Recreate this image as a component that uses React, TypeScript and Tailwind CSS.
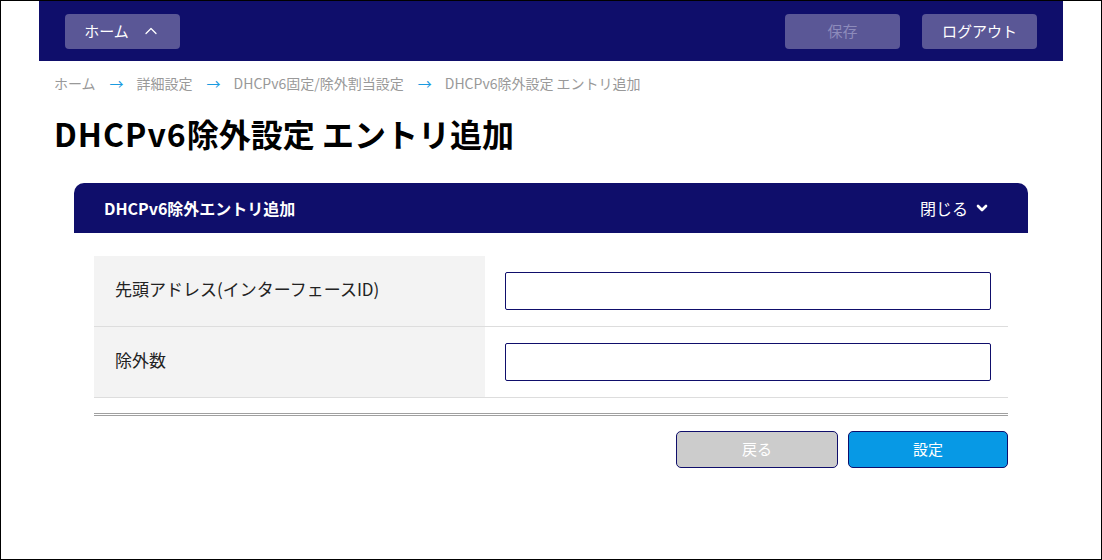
import { ChevronUp, ChevronDown } from "lucide-react";

const crumbs = ["ホーム", "詳細設定", "DHCPv6固定/除外割当設定", "DHCPv6除外設定 エントリ追加"];

const rows = ["先頭アドレス(インターフェースID)", "除外数"];

export default function App() {
  return (
    <div
      className="w-[1102px] h-[560px] border border-black bg-white text-[#222]"
      style={{ fontFamily: '"Noto Sans CJK JP", "Noto Sans", sans-serif' }}
    >
      <div className="w-[1024px] mx-auto">
        {/* top bar */}
        <header className="h-[60px] bg-[#0f0e6b] px-[26px] flex items-center justify-between">
          <button className="h-[35px] w-[115px] rounded bg-[#5a5796] text-white text-[15px] flex items-center justify-center gap-[12px]">
            ホーム
            <ChevronUp className="w-[20px] h-[20px]" strokeWidth={1.5} />
          </button>
          <div className="flex gap-[22px]">
            <button className="h-[35px] w-[115px] rounded bg-[#5a5796] text-[#8d8bbb] text-[15px]">保存</button>
            <button className="h-[35px] w-[115px] rounded bg-[#5a5796] text-white text-[15px]">ログアウト</button>
          </div>
        </header>

        {/* breadcrumb */}
        <nav className="pl-[15px] pt-[12px] flex items-center text-[14px] text-[#999]">
          {crumbs.map((c, i) => (
            <span key={c} className="flex items-center">
              {i > 0 && <span className="text-[#1a9be0] ml-[14px] mr-[13px]">→</span>}
              {c}
            </span>
          ))}
        </nav>

        <h1 className="pl-[15px] mt-[19px] text-[32px] font-bold text-black leading-[40px]">
          <span className="tracking-[1px]">DHCPv6</span>除外設定 エントリ追加
        </h1>

        {/* panel */}
        <section className="mx-[35px] mt-[30px]">
          <div className="h-[50px] bg-[#0f0e6b] rounded-t-[10px] pl-[30px] pr-[38px] flex items-center justify-between text-white">
            <span className="text-[16px] font-bold">DHCPv6除外エントリ追加</span>
            <span className="flex items-center gap-[6px] text-[16px]">
              閉じる
              <ChevronDown className="w-[16px] h-[16px]" strokeWidth={4} />
            </span>
          </div>

          <div className="px-[20px] pt-[23px]">
            {rows.map((r) => (
              <div key={r} className="flex h-[71px] border-b border-[#ddd]">
                <div className="w-[391px] bg-[#f3f3f3] pl-[21px] pb-[4px] flex items-center text-[17px]">{r}</div>
                <div className="flex-1 pl-[20px] pr-[17px] flex items-center">
                  <input className="w-full h-[38px] border border-[#0f0e6b] rounded-[2px] bg-white outline-none" />
                </div>
              </div>
            ))}

            <div className="mt-[15px] h-[3px] border-t border-b border-[#a0a0a0]" />

            <div className="mt-[15px] flex justify-end gap-[10px]">
              <button className="w-[162px] h-[37px] rounded-[5px] border border-[#0f0e6b] bg-[#cccccc] text-white text-[15px]">戻る</button>
              <button className="w-[160px] h-[37px] rounded-[5px] border border-[#0f0e6b] bg-[#0799e5] text-white text-[15px]">設定</button>
            </div>
          </div>
        </section>
      </div>
    </div>
  );
}
